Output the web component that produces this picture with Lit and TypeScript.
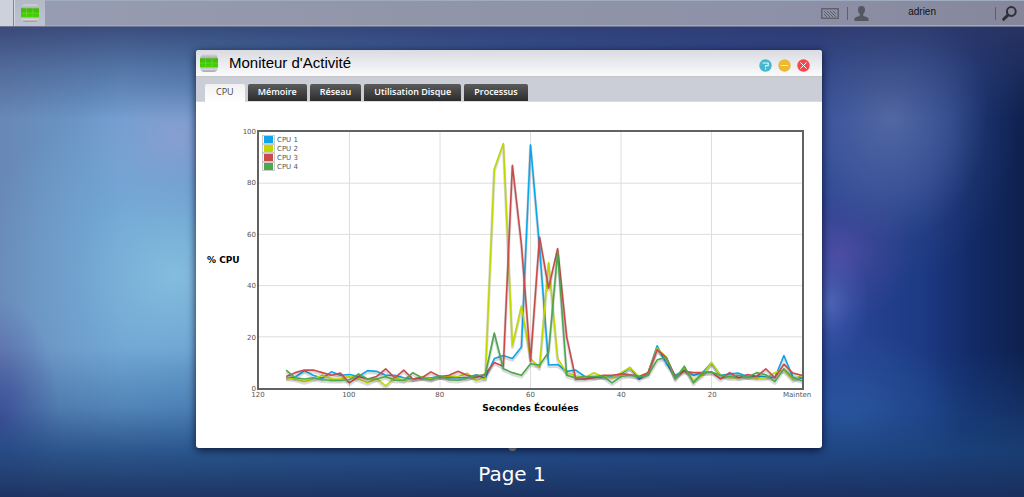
import { LitElement, html, svg, css } from "lit";
import { customElement, property, state } from "lit/decorators.js";
import { classMap } from "lit/directives/class-map.js";

interface Series {
  name: string;
  color: string;
  values: number[];
}

// One sample every two seconds, from 114 s ago to now.
const SERIES: Series[] = [
  {
    name: "CPU 1",
    color: "#0ea5ec",
    values: [4, 4.2, 6.8, 5, 3.8, 6.3, 5, 5.3, 4.5, 6.8, 6.5, 5, 5, 4, 3.5, 4, 4, 4.5, 4, 4, 4, 5.2, 3.8, 11.5, 12.7, 11.5, 16, 95, 55, 9, 9.2, 6.5, 7, 4.5, 4.3, 4.5, 4.7, 5.5, 8, 3.5, 6, 16.5, 9.5, 5, 7, 5, 6, 9.8, 5, 5.5, 5.8, 4.5, 4.5, 4.5, 4, 12.7, 4.2, 3.8],
  },
  {
    name: "CPU 2",
    color: "#bfd800",
    values: [4, 3.5, 2.5, 3.5, 5, 3.5, 3.5, 4.8, 3.5, 2, 3.8, 0.8, 4.2, 3, 3.5, 4.5, 3.5, 4.5, 4.5, 4.5, 5.8, 3, 3.8, 85.5, 95.5, 16.5, 32, 11.5, 8, 49, 11.5, 6, 4.8, 4, 6, 4.5, 4, 6, 8, 4.5, 6, 15.5, 12, 4, 8, 3, 5, 10, 5, 4, 4, 4.5, 3.8, 4, 6, 7, 3.2, 5],
  },
  {
    name: "CPU 3",
    color: "#cb4b4b",
    values: [4.5, 6, 7, 7, 6, 5, 5.8, 2, 4.5, 3.5, 4.5, 7.5, 4, 7, 3.5, 4, 6.3, 4.5, 5, 6.5, 5, 4.2, 5.5, 10, 8.5, 87, 56, 10.5, 59, 39, 54.5, 20, 3.5, 3.5, 4, 5, 5, 5.5, 5.3, 4.5, 6, 15, 12, 4.5, 6.5, 6, 6, 6.3, 3.5, 6, 4, 5.3, 4.5, 7.5, 4, 9.3, 5.8, 5],
  },
  {
    name: "CPU 4",
    color: "#4da74d",
    values: [7, 4, 3.5, 4, 3.2, 3, 3, 3.2, 5.5, 3.5, 3.5, 4.5, 3, 3, 6, 4, 3.2, 4.8, 3.2, 3, 3.8, 5, 5, 21.5, 7.5, 6, 5, 9.5, 9, 14, 53, 5, 4, 4.5, 4.5, 4.7, 2, 4.5, 5, 4.3, 5, 11, 12, 3.5, 8.5, 2, 6, 6.2, 5, 4.5, 5, 4.3, 6, 5.2, 2.5, 7.5, 4, 2.8],
  },
];

const TABS = ["CPU", "Mémoire", "Réseau", "Utilisation Disque", "Processus"];

@customElement("activity-icon")
class ActivityIcon extends LitElement {
  static styles = css`
    :host { display: block; width: 18px; height: 18px; }
    .glyph { display: block; width: 100%; height: 100%; }
  `;
  render() {
    return html`<svg class="glyph" viewBox="0 0 18 18" aria-hidden="true">
      <defs>
        <linearGradient id="shell" x1="0" y1="0" x2="0" y2="1">
          <stop offset="0" stop-color="#d2d4d8" />
          <stop offset="0.2" stop-color="#aeb1b5" />
          <stop offset="0.75" stop-color="#b9bbbf" />
          <stop offset="0.88" stop-color="#d4d6d9" />
          <stop offset="1" stop-color="#8f9297" />
        </linearGradient>
        <linearGradient id="screen" x1="0" y1="0" x2="0" y2="1">
          <stop offset="0" stop-color="#40b80c" />
          <stop offset="1" stop-color="#45d400" />
        </linearGradient>
      </defs>
      <rect x="0.3" y="0.3" width="17.4" height="17.4" rx="4" fill="url(#shell)" />
      <rect x="0" y="4.3" width="18" height="9" fill="url(#screen)" />
      <path d="M0 9.2h4l1-1 1 1.6 1-.6h4l1-1.4 1 1.4h5M5.500 4.300v9M12 4.300v9" fill="none" stroke="#7be048" stroke-width="0.5" />
    </svg>`;
  }
}

@customElement("top-bar")
class TopBar extends LitElement {
  static styles = css`
    :host {
      display: flex;
      align-items: center;
      box-sizing: border-box;
      height: 27px;
      padding-right: 7px;
      border-bottom: 1px solid #6d7694;
      background: linear-gradient(90deg, #979db3, #9195a8 40%, #8e92a8 75%, #85869b);
      box-shadow: inset 0 1px 0 #9facc0, inset 0 -1px 0 #a4a9ba;
      font-family: "Liberation Sans", Arial, sans-serif;
      font-size: 10px;
      color: #111;
    }
    button { margin: 0; padding: 0; border: 0; background: none; font: inherit; color: inherit; display: flex; align-items: center; }
    .show-desktop { width: 14px; height: 26px; background: #cdd1dc; border-right: 1px solid #7d859c; }
    .task { width: 31px; height: 26px; justify-content: center; background: linear-gradient(#b4b9c8, #bfc3d0); border-left: 1px solid #d5d8e1; box-sizing: border-box; }
    .spacer { flex: 1; }
    .sep { width: 1px; height: 13px; background: #5c606c; }
    .keyboard { margin-right: 8px; }
    .user { margin-left: 6px; gap: 39px; }
    .name { line-height: 12px; padding-bottom: 2px; }
    .tail { margin-left: 59px; }
    .search { margin-left: 6px; }
    svg { display: block; }
  `;
  render() {
    return html`
      <button class="show-desktop" aria-label="Bureau"></button>
      <button class="task" aria-label="Moniteur d'Activité"><activity-icon></activity-icon></button>
      <div class="spacer"></div>
      <button class="keyboard" aria-label="Tableau de bord">
        <svg width="18" height="11" viewBox="0 0 18 11">
          <rect x="0.75" y="0.75" width="16.500" height="9.500" fill="none" stroke="#5a5d67" stroke-width="1.300" />
          <path d="M3 6l3 3M3 3l6 6M6 3l6 6M9 3l6 6M12 3l3 3" stroke="#5c606b" stroke-width="1" />
        </svg>
      </button>
      <div class="sep"></div>
      <button class="user">
        <svg width="15" height="15" viewBox="0 0 15 15" aria-hidden="true">
          <path d="M7.500 0C9.900 0 11 1.500 11 3.700 11 5.600 10.300 7.200 9.200 8v1.500c.6 1 4.800 1.200 5.300 3V15H.5v-2.500c.5-1.800 4.700-2 5.300-3V8C4.700 7.200 4 5.600 4 3.700 4 1.500 5.100 0 7.500 0z" fill="#54575f" />
        </svg>
        <span class="name">adrien</span>
      </button>
      <div class="sep tail"></div>
      <button class="search" aria-label="Rechercher">
        <svg width="15" height="15" viewBox="0 0 15 15">
          <circle cx="9.300" cy="5.500" r="4.400" fill="none" stroke="#2e2f34" stroke-width="2" />
          <path d="M6 9L1.700 13.300" stroke="#2e2f34" stroke-width="3" stroke-linecap="round" />
        </svg>
      </button>
    `;
  }
}

@customElement("cpu-chart")
class CpuChart extends LitElement {
  @property({ attribute: false }) series: Series[] = [];

  static styles = css`
    :host {
      display: grid;
      grid-template-columns: 33px 17px 1fr;
      font-family: "DejaVu Sans", Verdana, sans-serif;
      font-size: 7px;
      line-height: 8px;
      color: #545454;
    }
    .caption { font-size: 9px; line-height: 12px; font-weight: bold; color: #000; white-space: nowrap; }
    .y-caption { align-self: center; }
    .x-caption { grid-column: 3; text-align: center; margin-top: 3px; }
    .y-ticks { display: flex; flex-direction: column; justify-content: space-between; text-align: right; padding-right: 1px; margin: -2px 0 -3px; }
    .plot { display: grid; height: 256px; border: 2px solid #626262; }
    .lines { grid-area: 1 / 1; display: block; width: 100%; height: 100%; min-width: 0; }
    .grid { stroke: #dedede; stroke-width: 1; vector-effect: non-scaling-stroke; }
    .line, .shadow { fill: none; vector-effect: non-scaling-stroke; stroke-linejoin: round; }
    .line { stroke-width: 1.6px; }
    .shadow { stroke: #000; stroke-opacity: 0.14; stroke-width: 3px; }
    .legend { grid-area: 1 / 1; justify-self: start; align-self: start; list-style: none; margin: 3px 0 0 3px; padding: 0; z-index: 1; }
    .entry { display: flex; align-items: center; gap: 2px; height: 9px; }
    .swatch { box-sizing: border-box; width: 13px; height: 9px; border: 1px solid #ccc; padding: 0 1px; background-clip: content-box; }
    .x-ticks { grid-column: 3; display: flex; justify-content: space-between; margin: 1px 1px 0; }
    .x-tick { width: 40px; margin: 0 -20px; text-align: center; }
    .x-tick:last-child { text-align: left; }
  `;

  private points(values: number[], shift = 0) {
    return values.map((v, i) => `${6 + i * 2},${100 - v + shift}`).join(" ");
  }

  render() {
    return html`
      <div class="caption y-caption">% CPU</div>
      <div class="y-ticks">${[100, 80, 60, 40, 20, 0].map((t) => html`<span>${t}</span>`)}</div>
      <div class="plot">
        <svg class="lines" viewBox="0 0 120 100" preserveAspectRatio="none" role="img" aria-label="% CPU">
          ${[20, 40, 60, 80].map((y) => svg`<line class="grid" x1="0" x2="120" y1=${y} y2=${y} />`)}
          ${[20, 40, 60, 80, 100].map((x) => svg`<line class="grid" x1=${x} x2=${x} y1="0" y2="100" />`)}
          ${this.series.map(
            (s) => svg`
              <polyline class="shadow" points=${this.points(s.values, 0.7)} />
              <polyline class="line" stroke=${s.color} points=${this.points(s.values)} />`
          )}
        </svg>
        <ul class="legend">
          ${this.series.map(
            (s) => html`<li class="entry"><span class="swatch" style="background-color:${s.color}"></span>${s.name}</li>`
          )}
        </ul>
      </div>
      <div class="x-ticks">
        ${["120", "100", "80", "60", "40", "20", "Mainten"].map((t) => html`<span class="x-tick">${t}</span>`)}
      </div>
      <div class="caption x-caption">Secondes Écoulées</div>
    `;
  }
}

@customElement("monitor-window")
class MonitorWindow extends LitElement {
  @state() private active = 0;

  static styles = css`
    :host {
      display: block;
      background: #fff;
      border-radius: 3px;
      box-shadow: 0 2px 8px rgba(0, 5, 30, 0.8);
      overflow: hidden;
    }
    button { margin: 0; padding: 0; border: 0; font: inherit; color: inherit; }
    .title-bar {
      display: flex;
      align-items: center;
      box-sizing: border-box;
      height: 27px;
      padding: 0 12px 0 4px;
      border-bottom: 1px solid #c3c5c8;
      background: linear-gradient(#d9dbe1, #fbfbfc);
    }
    .title { flex: 1; margin: 0 0 0 11px; font: 15px/18px "Liberation Sans", Arial, sans-serif; color: #000; }
    .controls { display: flex; gap: 6px; padding-top: 4px; }
    .control { width: 13px; height: 13px; background: none; }
    .control svg { display: block; }
    .tabs {
      display: flex;
      gap: 3px;
      align-items: flex-end;
      height: 25px;
      padding: 0 9px;
      border-bottom: 1px solid #d9dbe1;
      box-sizing: border-box;
      background: #cbced7;
      font: 600 9px/16px "Open Sans", "Noto Sans", sans-serif;
    }
    .tab { height: 17px; padding: 0 10px 1px; border-radius: 2px 2px 0 0; color: #fff; background: linear-gradient(#5b5b5b, #2c2c2c); white-space: nowrap; }
    .tab.active { height: 18px; padding: 0 11px 2px; margin-bottom: -1px; color: #444; background: linear-gradient(#f1f1f2, #fff); font-weight: 400; }
    .body { padding: 28px 18px 34px 11px; }
  `;

  render() {
    return html`
      <header class="title-bar">
        <activity-icon></activity-icon>
        <h1 class="title">Moniteur d'Activité</h1>
        <div class="controls">
          <button class="control" aria-label="Aide">
            <svg width="13" height="13" viewBox="0 0 13 13">
              <circle cx="6.500" cy="6.500" r="6.200" fill="#46b8ce" />
              <path d="M3.500 4h5.700v2.700H6.600v1.600M6.600 9.300v1.200" fill="none" stroke="#e8fafd" stroke-width="1.100" />
            </svg>
          </button>
          <button class="control" aria-label="Réduire">
            <svg width="13" height="13" viewBox="0 0 13 13">
              <circle cx="6.500" cy="6.500" r="6.200" fill="#ecb92f" />
              <path d="M2.800 6.500h7.400" stroke="#fbe9b4" stroke-width="1.200" />
            </svg>
          </button>
          <button class="control" aria-label="Fermer">
            <svg width="13" height="13" viewBox="0 0 13 13">
              <circle cx="6.500" cy="6.500" r="6.200" fill="#f8474b" />
              <path d="M3.400 3.400l6.200 6.200M9.600 3.400l-6.200 6.200" stroke="#fff" stroke-width="1" />
            </svg>
          </button>
        </div>
      </header>
      <nav class="tabs" role="tablist">
        ${TABS.map(
          (t, i) => html`<button
            role="tab"
            aria-selected=${i === this.active ? "true" : "false"}
            class=${classMap({ tab: true, active: i === this.active })}
            @click=${() => (this.active = i)}
          >${t}</button>`
        )}
      </nav>
      <section class="body"><cpu-chart .series=${SERIES}></cpu-chart></section>
    `;
  }
}

@customElement("app-root")
class AppRoot extends LitElement {
  static styles = css`
    :host {
      display: flex;
      flex-direction: column;
      min-height: 100vh;
      overflow: hidden;
      background:
        linear-gradient(180deg, rgba(46, 56, 104, 0.8) 5%, rgba(48, 62, 112, 0.4) 14%, rgba(48, 62, 112, 0) 24%),
        linear-gradient(0deg, rgba(26, 48, 94, 0.95) 0%, rgba(28, 68, 124, 0.8) 9%, rgba(30, 78, 140, 0.35) 18%, rgba(30, 78, 140, 0) 30%),
        radial-gradient(ellipse 60px 120px at 0 420px, rgba(70, 68, 152, 0.8), rgba(70, 68, 152, 0.3) 55%, rgba(70, 68, 152, 0)),
        radial-gradient(ellipse 100px 90px at 175px 135px, rgba(146, 160, 210, 0.75), rgba(146, 160, 210, 0.25) 55%, rgba(146, 160, 210, 0)),
        radial-gradient(ellipse 200px 190px at 175px 275px, rgba(136, 192, 224, 0.9), rgba(124, 182, 222, 0.4) 50%, rgba(120, 184, 222, 0)),
        radial-gradient(ellipse 40px 55px at 81% 61%, rgba(88, 112, 192, 0.7), rgba(84, 106, 190, 0.25) 55%, rgba(84, 106, 190, 0)),
        radial-gradient(ellipse 75px 70px at 82% 51%, rgba(84, 78, 166, 0.8), rgba(78, 72, 156, 0.35) 50%, rgba(78, 72, 156, 0)),
        radial-gradient(ellipse 110px 90px at 83% 84%, rgba(48, 94, 172, 0.85), rgba(44, 86, 160, 0.4) 50%, rgba(44, 86, 160, 0)),
        radial-gradient(ellipse 130px 170px at 87% 23%, rgba(88, 108, 166, 0.9), rgba(76, 98, 160, 0.6) 45%, rgba(58, 76, 136, 0.2) 75%, rgba(58, 76, 136, 0)),
        linear-gradient(90deg, #6888b6 0%, #6a9ccc 12%, #5a92c6 20%, #3c64ae 50%, #2c489a 80%, #1d3a84 90%, #122a66 95%, #0e204e 100%);
    }
    .desktop { flex: 1; display: flex; flex-direction: column; padding: 23px 202px 0 196px; }
    .window { position: relative; z-index: 1; }
    .pager { display: flex; flex-direction: column; align-items: center; margin-top: -6px; padding-left: 6px; }
    .dot { width: 9px; height: 9px; padding: 0; border: 0; border-radius: 50%; background: #a5a6aa; }
    .page-name { margin: 11px 0 0; font: 20px/24px "DejaVu Sans", Verdana, sans-serif; color: #fff; }
  `;

  render() {
    return html`
      <top-bar></top-bar>
      <main class="desktop">
        <monitor-window class="window"></monitor-window>
        <footer class="pager">
          <button class="dot" aria-label="Page 1"></button>
          <p class="page-name">Page 1</p>
        </footer>
      </main>
    `;
  }
}
